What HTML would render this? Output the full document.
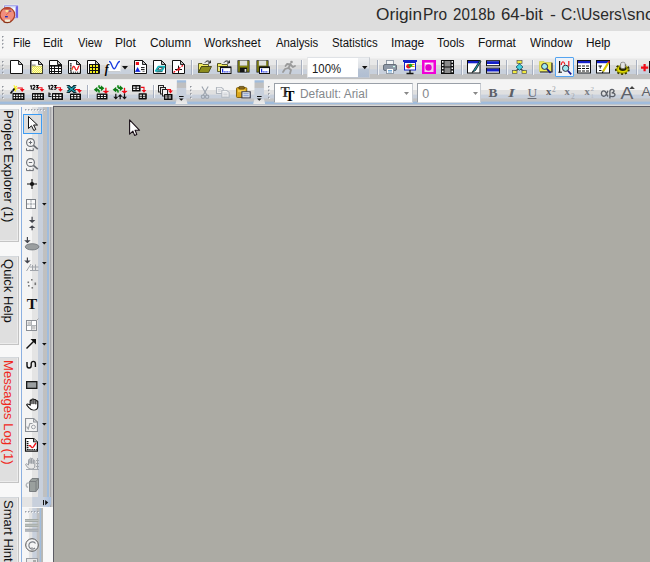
<!DOCTYPE html>
<html><head><meta charset="utf-8">
<style>
*{box-sizing:border-box;margin:0;padding:0}
html,body{width:650px;height:562px;overflow:hidden;background:#acaba4;font-family:"Liberation Sans",sans-serif;}
#root{position:relative;width:650px;height:562px;overflow:hidden;background:#acaba4}
.abs{position:absolute}
#title{left:0;top:0;width:650px;height:31px;background:#dddddd}
#title span{position:absolute;top:6.3px;font-size:15.6px;color:#2a2a2a;white-space:nowrap;transform-origin:0 0}
#menu{left:0;top:31px;width:650px;height:25px;background:#f6f6f6}
#menu span{position:absolute;top:5px;font-size:12.5px;color:#111;white-space:nowrap;transform-origin:0 0}
#tb1{left:0;top:56px;width:650px;height:24px;background:linear-gradient(#f4f4f4 0.0%,#f4f4f4 8.3%,#e8e8e8 12.5%,#e8e8e8 35.4%,#d8d8d8 39.6%,#d8d8d8 53.3%,#c8d0dc 57.5%,#c8d0dc 72.9%,#c0c0c0 77.1%,#c0c0c0 93.8%,#ececec 97.9%,#ececec 100.0%)}
#tb2{left:0;top:80px;width:650px;height:25px;background:linear-gradient(#f4f4f4 0.0%,#f4f4f4 38.0%,#e0e0e0 42.0%,#e0e0e0 56.4%,#c8d0dc 60.4%,#c8d0dc 71.6%,#c4c4c4 75.6%,#c4c4c4 84.4%,#a0bcdc 88.4%,#a0bcdc 94.8%,#c4c6c8 98.8%,#c4c6c8 100.0%)}
#leftdock{left:0;top:105px;width:53px;height:457px;background:#f8f8f8}
#vtb{left:22px;top:107px;width:31px;height:400px;background:linear-gradient(90deg,#f4f4f4 0.0%,#f4f4f4 30.6%,#e4e4e4 33.9%,#e4e4e4 50.0%,#c8d0dc 53.2%,#c8d0dc 66.1%,#c0c0c0 69.4%,#c0c0c0 79.0%,#a0bcdc 82.3%,#a0bcdc 85.5%,#c8c8c8 88.7%,#c8c8c8 89.4%,#a0a0a4 92.6%,#a0a0a4 92.9%,#d0d0d0 96.1%,#d0d0d0 100.0%)}
#vtb2{left:22px;top:507px;width:21.4px;height:55px;background:linear-gradient(90deg,#f6f6f6 0.0%,#f6f6f6 30.4%,#e4e4e4 35.0%,#e4e4e4 46.7%,#c8d0dc 51.4%,#c8d0dc 67.8%,#c0c0c0 72.4%,#c0c0c0 81.8%,#a0bcdc 86.4%,#a0bcdc 88.8%,#b8b8b4 93.5%,#b8b8b4 100.0%)}
#gap{left:53px;top:105px;width:597px;height:1.3px;background:#d8d8d8}
.sep{position:absolute;width:1px;background:#a8b0c0;box-shadow:1px 0 0 rgba(255,255,255,.7)}
.tab{position:absolute;left:0;width:19px;background:#dfdfdf;border-right:1px solid #c2c2c2;border-bottom:1px solid #c4c4c4;border-top:1px solid #d4d8dc;box-shadow:inset -1px -1px 0 #ececec}
.tabt{position:absolute;left:0;top:0;transform-origin:0 0;transform:translate(16.3px,0) rotate(90deg) scaleX(.975);font-size:13.4px;white-space:nowrap;color:#111}
svg{position:absolute;overflow:visible}
.combo{position:absolute;background:#fff;border:1px solid #b8bcc4}
</style></head><body>
<div id="root">
<div id="title" class="abs"><span style="left:376.0px;transform:scaleX(1.107)">Origin</span><span style="left:422.71px;transform:scaleX(0.988)">Pro</span><span style="left:452.9px;transform:scaleX(0.97)">2018b</span><span style="left:501.0px;transform:scaleX(1.076)">64-bit</span><span style="left:550.3px;transform:scaleX(1.14)">-</span><span style="left:560.6px;transform:scaleX(1.005)">C:\Users\</span><span style="left:627.3px;transform:scaleX(1.091)">snc</span></div>
<div id="menu" class="abs"><span style="left:13.02px;transform:scaleX(0.881)">File</span><span style="left:43.39px;transform:scaleX(0.911)">Edit</span><span style="left:77.5px;transform:scaleX(0.894)">View</span><span style="left:114.94px;transform:scaleX(0.964)">Plot</span><span style="left:149.8px;transform:scaleX(0.953)">Column</span><span style="left:204.4px;transform:scaleX(0.953)">Worksheet</span><span style="left:275.6px;transform:scaleX(0.907)">Analysis</span><span style="left:331.5px;transform:scaleX(0.912)">Statistics</span><span style="left:390.54px;transform:scaleX(0.956)">Image</span><span style="left:437.4px;transform:scaleX(0.94)">Tools</span><span style="left:477.84px;transform:scaleX(0.956)">Format</span><span style="left:529.5px;transform:scaleX(0.951)">Window</span><span style="left:585.55px;transform:scaleX(0.949)">Help</span></div>
<div id="tb1" class="abs"></div>
<div id="tb2" class="abs"></div>
<div id="leftdock" class="abs">
<div class="tab" style="top:4.2px;height:132.6px"><div class="tabt" style="top:0.1px">Project Explorer (1)</div></div>
<div class="tab" style="top:150.9px;height:88.8px"><div class="tabt" style="top:2px">Quick Help</div></div>
<div class="tab" style="top:251.6px;height:126.5px"><div class="tabt" style="top:2.4px;color:#f0281c">Messages Log (1)</div></div>
<div class="tab" style="top:392px;height:70px"><div class="tabt" style="top:2.4px">Smart Hint</div></div>
</div>
<div class="abs" style="left:20.8px;top:107px;width:1.3px;height:455px;background:#8cb0e0"></div>
<div id="vtb" class="abs"></div>
<div id="vtb2" class="abs"></div>
<div id="gap" class="abs"></div>
<div class="abs" style="left:53px;top:106.2px;width:597px;height:456px;background:#acaba4;border-left:1.3px solid #5c5c64;border-top:1.3px solid #5c5c64"></div>
<div class="abs" style="left:43.4px;top:507px;width:9.6px;height:55px;background:#f8f8f8"></div>
<svg style="left:2px;top:36.2px" width="3" height="15" viewBox="0 0 3 15" ><rect x="0" y="0.0" width="1.6" height="1.6" fill="#8e929a"/><rect x="0.9" y="0.9" width="1.2" height="1.2" fill="#fff" opacity=".85"/><rect x="0" y="3.6" width="1.6" height="1.6" fill="#8e929a"/><rect x="0.9" y="4.5" width="1.2" height="1.2" fill="#fff" opacity=".85"/><rect x="0" y="7.2" width="1.6" height="1.6" fill="#8e929a"/><rect x="0.9" y="8.1" width="1.2" height="1.2" fill="#fff" opacity=".85"/><rect x="0" y="10.8" width="1.6" height="1.6" fill="#8e929a"/><rect x="0.9" y="11.7" width="1.2" height="1.2" fill="#fff" opacity=".85"/></svg>
<svg style="left:2px;top:60.5px" width="3" height="15" viewBox="0 0 3 15" ><rect x="0" y="0.0" width="1.6" height="1.6" fill="#8e929a"/><rect x="0.9" y="0.9" width="1.2" height="1.2" fill="#fff" opacity=".85"/><rect x="0" y="3.6" width="1.6" height="1.6" fill="#8e929a"/><rect x="0.9" y="4.5" width="1.2" height="1.2" fill="#fff" opacity=".85"/><rect x="0" y="7.2" width="1.6" height="1.6" fill="#8e929a"/><rect x="0.9" y="8.1" width="1.2" height="1.2" fill="#fff" opacity=".85"/><rect x="0" y="10.8" width="1.6" height="1.6" fill="#8e929a"/><rect x="0.9" y="11.7" width="1.2" height="1.2" fill="#fff" opacity=".85"/></svg>
<svg style="left:10px;top:60px" width="13" height="14" viewBox="0 0 13 14" ><path d="M0.5 0.5H8.5L12.5 4.5V13.5H0.5Z" fill="#fff" stroke="#111"/><path d="M8.5 0.5V4.5H12.5Z" fill="#bbb" stroke="#111" stroke-width="0.9"/></svg>
<svg style="left:30px;top:60px" width="13" height="14" viewBox="0 0 13 14" ><defs><pattern id="chk" width="2" height="2" patternUnits="userSpaceOnUse"><rect width="2" height="2" fill="#f0ec48"/><rect width="1" height="1" fill="#fafac8"/><rect x="1" y="1" width="1" height="1" fill="#fafac8"/></pattern></defs><path d="M0.5 0.5H8.5L12.5 4.5V13.5H0.5Z" fill="#fff" stroke="#111"/><path d="M8.5 0.5V4.5H12.5Z" fill="#bbb" stroke="#111" stroke-width="0.9"/><path d="M1.2 1V13" stroke="#555" stroke-width="1"/><rect x="1.8" y="4.4" width="3.8" height="2.2" fill="#a8a8a8"/><rect x="1.8" y="6.3" width="10.4" height="6.9" fill="url(#chk)"/><path d="M1.8 6.3H12.2" stroke="#c8c440" stroke-width=".6"/></svg>
<svg style="left:48.5px;top:60px" width="13" height="14" viewBox="0 0 13 14" ><path d="M0.5 0.5H8.5L12.5 4.5V13.5H0.5Z" fill="#fff" stroke="#111"/><path d="M8.5 0.5V4.5H12.5Z" fill="#bbb" stroke="#111" stroke-width="0.9"/><path d="M1 5.5H12.5M1 8.5H12.5M1 11H12.5M2 5.5V13.5M5.5 5.5V13.5M9 5.5V13.5" stroke="#111" stroke-width="1" fill="none" shape-rendering="crispEdges"/><path d="M1 6.3H12.5" stroke="#111" stroke-width=".8"/></svg>
<svg style="left:68px;top:60px" width="13" height="14" viewBox="0 0 13 14" ><path d="M0.5 0.5H8.5L12.5 4.5V13.5H0.5Z" fill="#fff" stroke="#111"/><path d="M8.5 0.5V4.5H12.5Z" fill="#bbb" stroke="#111" stroke-width="0.9"/><path d="M2.8 3.2V12.4" stroke="#111" stroke-width="1.7" stroke-dasharray="1.3 .8"/><path d="M3 12.2H11.5" stroke="#222" stroke-width="1" stroke-dasharray="1.2 .8"/><path d="M4.3 9.8C4.6 5.6 6.2 5.4 7 8S9 10.8 9.8 8.4S10.6 5.6 11.6 5.8" stroke="#f0181c" stroke-width="1.25" fill="none"/><path d="M4.3 8V10" stroke="#f0a020" stroke-width=".8"/></svg>
<svg style="left:87px;top:60px" width="13" height="14" viewBox="0 0 13 14" ><path d="M0.5 0.5H8.5L12.5 4.5V13.5H0.5Z" fill="#fff" stroke="#111"/><path d="M8.5 0.5V4.5H12.5Z" fill="#bbb" stroke="#111" stroke-width="0.9"/><rect x="2" y="4" width="10" height="9.2" fill="#f2ee1c"/><path d="M2 4.5H12M2 7.5H12M2 10.5H12M2 13.5H12M2.5 4V13.5M5.5 4V13.5M8.5 4V13.5M11.5 4V13.5" stroke="#111" stroke-width="1" fill="none" shape-rendering="crispEdges"/></svg>
<svg style="left:106px;top:60px" width="15" height="14" viewBox="0 0 15 14" ><rect x="2.5" y="0" width="12" height="11.5" fill="#fff"/><path d="M2.5 11.5H14.5" stroke="#999" stroke-width=".7" stroke-dasharray="1 1"/><path d="M3 1.5C5.5 1 6 8.8 8.2 8.8S11 1 14 1.5" stroke="#1c3ce0" stroke-width="1.3" fill="none"/><text x="-1.2" y="13.2" font-family="Liberation Serif" font-style="italic" font-weight="bold" font-size="11.5" fill="#000">f</text></svg>
<svg style="left:122px;top:66px" width="6" height="4" viewBox="0 0 6 4" ><path d="M0 0H6L3 3.5Z" fill="#111"/></svg>
<svg style="left:134px;top:60px" width="13" height="14" viewBox="0 0 13 14" ><path d="M0.5 0.5H8.5L12.5 4.5V13.5H0.5Z" fill="#fff" stroke="#111"/><path d="M8.5 0.5V4.5H12.5Z" fill="#bbb" stroke="#111" stroke-width="0.9"/><rect x="1.8" y="2" width="3.2" height="3" fill="#f0101c"/><path d="M1.2 11.4L3.6 7L6 11.4Z" fill="#1428e0"/><path d="M1.2 11.4H6.4" stroke="#1428e0" stroke-width=".8"/><path d="M7 7.6H10.6M7 9.6H10.6" stroke="#111" stroke-width="1"/><path d="M8.5 11.4H10.6" stroke="#555" stroke-width=".9"/></svg>
<svg style="left:153px;top:60px" width="13" height="14" viewBox="0 0 13 14" ><path d="M0.5 0.5H8.5L12.5 4.5V13.5H0.5Z" fill="#fff" stroke="#111"/><path d="M8.5 0.5V4.5H12.5Z" fill="#bbb" stroke="#111" stroke-width="0.9"/><path d="M2.6 11L5.4 6.4H11.6L8.8 11Z" stroke="#10b4bc" stroke-width="1.5" fill="#d8f4f4" stroke-linejoin="round"/><path d="M4.6 9.8L6.2 7.6H9.6L8 9.8Z" stroke="#0a2a30" stroke-width=".8" fill="#fff"/><path d="M3.4 12L9.4 11.6" stroke="#0a2a30" stroke-width=".7"/></svg>
<svg style="left:172px;top:60px" width="13" height="14" viewBox="0 0 13 14" ><path d="M0.5 0.5H8.5L12.5 4.5V13.5H0.5Z" fill="#fff" stroke="#111"/><path d="M8.5 0.5V4.5H12.5Z" fill="#bbb" stroke="#111" stroke-width="0.9"/><path d="M1.5 12.5L11.8 4.8" stroke="#f0101c" stroke-width="1.3" stroke-dasharray="2 1.3"/><path d="M6.5 5.6V13M3 9.5H10" stroke="#111" stroke-width="1"/><circle cx="6.5" cy="9.5" r="1.3" fill="#e01018"/></svg>
<div class="sep" style="left:191px;top:59.5px;height:15px"></div>
<svg style="left:198px;top:60px" width="14" height="14" viewBox="0 0 14 14" ><path d="M0.5 3.5H4L5 4.5H10.5V6.5H3.5L0.5 12.5Z" fill="#f1ea5e" stroke="#3a3a10" stroke-width=".8"/><path d="M0.5 12.5L3.5 6.5H13.5L10.5 12.5Z" fill="#8c8c1c" stroke="#3a3a10" stroke-width=".8"/><path d="M7 2.5C8.5 0.5 11 0.5 12 2.5M12.3 0.5V3H10" stroke="#111" stroke-width="1" fill="none"/></svg>
<svg style="left:217px;top:60px" width="15" height="14" viewBox="0 0 15 14" ><path d="M0.5 3.5H4L5 4.5H10.5V6.5H0.5Z" fill="#f1ea5e" stroke="#3a3a10" stroke-width=".8"/><path d="M0.5 4V11.5H3" fill="#f1ea5e" stroke="#3a3a10" stroke-width=".8"/><path d="M7 2.5C8.5 0.5 11 0.5 12 2.5M12.3 0.5V3H10" stroke="#111" stroke-width="1" fill="none"/><rect x="3.5" y="7" width="10.5" height="6.5" fill="#fff" stroke="#111" stroke-width="1"/><path d="M3.5 7.4H14" stroke="#111" stroke-width="1.4"/><path d="M5.6 8.8V12" stroke="#1428e0" stroke-width="1.2"/><path d="M5 11.8H12.6" stroke="#1428e0" stroke-width="1.2" stroke-dasharray="1.4 .8"/></svg>
<svg style="left:237px;top:60px" width="13" height="14" viewBox="0 0 13 14" ><rect x="0.5" y="0.3" width="12" height="12.2" fill="#0c0c0c"/><rect x="1.2" y="1" width="1.6" height="10.8" fill="#8c8c10"/><rect x="10.2" y="1" width="1.6" height="10.8" fill="#8c8c10"/><rect x="2.8" y="0.6" width="7.4" height="5.2" fill="#e0e0dc"/><rect x="2.8" y="5.8" width="7.4" height="1.8" fill="#8c8c10"/><rect x="3" y="8.4" width="7" height="3.8" fill="#141414"/><rect x="7.6" y="9" width="1.7" height="2.8" fill="#e0e0dc"/></svg>
<svg style="left:255.5px;top:60px" width="14" height="14" viewBox="0 0 14 14" ><rect x="0.5" y="0.3" width="12" height="12.2" fill="#0c0c0c"/><rect x="1.2" y="1" width="1.6" height="10.8" fill="#8c8c10"/><rect x="10.2" y="1" width="1.6" height="10.8" fill="#8c8c10"/><rect x="2.8" y="0.6" width="7.4" height="5.2" fill="#e0e0dc"/><rect x="2.8" y="5.8" width="7.4" height="1.8" fill="#8c8c10"/><rect x="3" y="8.4" width="7" height="3.8" fill="#141414"/><rect x="7.6" y="9" width="1.7" height="2.8" fill="#e0e0dc"/><rect x="3.5" y="7" width="10" height="6.5" fill="#fff" stroke="#111" stroke-width="1"/><path d="M3.5 7.4H13.5" stroke="#111" stroke-width="1.4"/><path d="M5.6 8.8V12" stroke="#1428e0" stroke-width="1.2"/><path d="M5 11.8H12.2" stroke="#1428e0" stroke-width="1.2" stroke-dasharray="1.4 .8"/></svg>
<div class="sep" style="left:276px;top:59.5px;height:15px"></div>
<svg style="left:282px;top:60px" width="14" height="14" viewBox="0 0 14 14" ><g fill="none" stroke="#9a9a9a" stroke-width="1.8" stroke-linecap="round" stroke-linejoin="round"><circle cx="9.5" cy="2" r="1.3" fill="#9a9a9a" stroke="none"/><path d="M8.5 4L6.5 8L9 10L8 13.5"/><path d="M6.5 8L3 9L1 12"/><path d="M8.5 4.5L5 4L3.5 6"/><path d="M8.8 5L11 7L13 6"/></g></svg>
<div class="sep" style="left:301px;top:59.5px;height:15px"></div>
<div class="combo" style="left:307px;top:57px;width:63px;height:21px;border-color:#dfe2e6 #c8ccd2 #c0c6d0 #e8e8e8"><div style="position:absolute;left:4.2px;top:2.5px;font-size:12.8px;color:#1a1a1a;transform-origin:0 0;transform:scaleX(.89)">100%</div><div style="position:absolute;right:0;top:0;width:11px;height:19px;background:linear-gradient(#eef0f2,#dcdfe4 50%,#b7c3d4 60%,#b0bed2)"></div></div>
<svg style="left:362px;top:66px" width="6" height="4" viewBox="0 0 6 4" ><path d="M0 0H5.5L2.75 3.2Z" fill="#111"/></svg>
<div class="sep" style="left:377px;top:59.5px;height:15px"></div>
<svg style="left:383px;top:60px" width="14" height="14" viewBox="0 0 14 14" ><rect x="3.5" y="0.5" width="7" height="5" fill="#f4f6f8" stroke="#8a94a0" stroke-width=".9"/><rect x="0.5" y="4.5" width="13" height="6" rx="1.5" fill="#8e98a6" stroke="#5c6672" stroke-width=".9"/><rect x="3.5" y="8.5" width="7" height="5" fill="#fff" stroke="#8a94a0" stroke-width=".9"/><rect x="10" y="6" width="2" height="1.2" fill="#cfe"/><path d="M5 10.5H9M5 12H9" stroke="#38c" stroke-width=".7"/></svg>
<svg style="left:402.5px;top:60px" width="14" height="15" viewBox="0 0 14 15" ><rect x="0" y="0" width="14" height="2" fill="#1420c8"/><rect x="1.5" y="2.5" width="11" height="7.5" fill="#fff" stroke="#1420c8" stroke-width="1"/><circle cx="5.5" cy="6.2" r="2.3" fill="#e8181c"/><circle cx="7.5" cy="5.5" r="1.8" fill="#1ca01c"/><path d="M9 4.5H11.5M9 6.5H11.5" stroke="#c8a000" stroke-width="1"/><path d="M7 10V13M3.5 13.5H10.5" stroke="#111" stroke-width="1.3"/></svg>
<svg style="left:421.5px;top:60px" width="14" height="14" viewBox="0 0 14 14" ><rect x="0" y="0" width="14" height="14" fill="#f000d8"/><rect x="2.5" y="2.5" width="9" height="9.5" fill="#f4c8ee"/><circle cx="6.5" cy="7.5" r="3.2" fill="#e000cc"/><path d="M3 3.5H8" stroke="#fff" stroke-width="1"/></svg>
<svg style="left:441px;top:60px" width="13" height="14" viewBox="0 0 13 14" ><rect x="0" y="0" width="13" height="14" fill="#0c0c0c"/><rect x="3.5" y="1" width="6" height="5.5" fill="#8a8a8a"/><rect x="3.5" y="7.5" width="6" height="5.5" fill="#8a8a8a"/><g fill="#fff"><rect x="1" y="1" width="1.5" height="1.7"/><rect x="1" y="4.2" width="1.5" height="1.7"/><rect x="1" y="7.4" width="1.5" height="1.7"/><rect x="1" y="10.6" width="1.5" height="1.7"/><rect x="10.5" y="1" width="1.5" height="1.7"/><rect x="10.5" y="4.2" width="1.5" height="1.7"/><rect x="10.5" y="7.4" width="1.5" height="1.7"/><rect x="10.5" y="10.6" width="1.5" height="1.7"/></g></svg>
<div class="sep" style="left:461px;top:59.5px;height:15px"></div>
<svg style="left:466.5px;top:60px" width="14" height="14" viewBox="0 0 14 14" ><rect x="0.5" y="0.5" width="12.5" height="12.5" fill="#fff" stroke="#111" stroke-width="1"/><rect x="1" y="1" width="11.5" height="2.3" fill="#1420c8"/><path d="M12.8 0.5L7 9.5L5 12.5L8.5 10.5L13.8 1.5Z" fill="#1ca8b8" stroke="#111" stroke-width=".8"/></svg>
<svg style="left:486px;top:60px" width="14" height="14" viewBox="0 0 14 14" ><rect x="0.5" y="0.7" width="13" height="5" fill="#fff" stroke="#111"/><rect x="1" y="1.2" width="12" height="2.8" fill="#1420c8"/><rect x="0.5" y="8.2" width="13" height="5" fill="#fff" stroke="#111"/><rect x="1" y="8.7" width="12" height="2.8" fill="#1420c8"/></svg>
<div class="sep" style="left:506px;top:59.5px;height:15px"></div>
<svg style="left:512px;top:60px" width="15" height="14" viewBox="0 0 15 14" ><path d="M7.5 3V5M7.5 9L2.5 11M7.5 9L12.5 11" stroke="#111" stroke-width="1"/><rect x="5" y="0.5" width="5" height="3" fill="#f1ea3e" stroke="#555" stroke-width=".7"/><path d="M7.5 3.8L11 7L7.5 10.2L4 7Z" fill="#48d0e0" stroke="#156" stroke-width=".8"/><rect x="0.5" y="10.5" width="4.5" height="3" fill="#f1ea3e" stroke="#555" stroke-width=".7"/><rect x="10" y="10.5" width="4.5" height="3" fill="#f1ea3e" stroke="#555" stroke-width=".7"/></svg>
<div class="sep" style="left:532px;top:59.5px;height:15px"></div>
<svg style="left:539px;top:60px" width="14" height="14" viewBox="0 0 14 14" ><path d="M0.5 1.5H5L6 2.5H12.5V11.5H0.5Z" fill="#f0ec58" stroke="#c8c440" stroke-width=".6"/><path d="M13 2.8V12H1" stroke="#222" stroke-width="1.2" fill="none"/><circle cx="5.6" cy="6.4" r="3" fill="#a0e8f0" stroke="#2a2a3a" stroke-width="1"/><path d="M7.8 8.8L11.6 12.8" stroke="#14148c" stroke-width="1.7"/></svg>
<div style="position:absolute;left:555px;top:57.2px;width:19px;height:19.6px;border:1px solid #54a4f0;background:#eef2f8;border-radius:1px"></div>
<svg style="left:558px;top:60px" width="14" height="15" viewBox="0 0 14 15" ><path d="M1.6 1V12.4" stroke="#111" stroke-width="1.2"/><path d="M0.3 12.2H4" stroke="#111" stroke-width="1"/><path d="M3.2 5C4 0.5 6 1 6.8 4.5M10.8 1V6.5" stroke="#f0181c" stroke-width="1.2" fill="none"/><circle cx="7.6" cy="8.3" r="3.1" fill="#a0e8f0" stroke="#2a2a3a" stroke-width="1"/><path d="M9.9 10.7L13.2 14.4" stroke="#14148c" stroke-width="1.7"/></svg>
<svg style="left:577px;top:60px" width="14" height="14" viewBox="0 0 14 14" ><rect x="0.5" y="0.5" width="13" height="12.5" fill="#fff" stroke="#111"/><rect x="1" y="1" width="12" height="2.2" fill="#1420c8"/><path d="M1 6H13M1 8.5H13M1 11H13" stroke="#111" stroke-width="1.2" stroke-dasharray="3 1"/></svg>
<svg style="left:596px;top:60px" width="14" height="14" viewBox="0 0 14 14" ><rect x="0.5" y="0.5" width="13" height="12.5" fill="#fff" stroke="#111"/><rect x="1" y="1" width="12" height="2.2" fill="#1420c8"/><path d="M2.5 6H6M4.2 6V8.5M3 10.5H5.5" stroke="#111" stroke-width="1"/><path d="M12.5 2.5L7 11.5" stroke="#d8c800" stroke-width="2.2"/><path d="M12.2 1.5L13.5 2.5" stroke="#e8181c" stroke-width="1.8"/><path d="M7 11.5L6.3 13" stroke="#111" stroke-width="1.2"/></svg>
<svg style="left:614.5px;top:61.5px" width="15" height="13" viewBox="0 0 15 13" ><ellipse cx="7.4" cy="7.4" rx="6.2" ry="4.3" fill="#d4d000" stroke="#3a3800" stroke-width="2.4" stroke-dasharray="2 1.7"/><ellipse cx="7.4" cy="7.4" rx="5.6" ry="3.7" fill="#dcd800" stroke="#8a8600" stroke-width=".8"/><ellipse cx="7.8" cy="6.6" rx="3.8" ry="2.3" fill="#2a2800"/><rect x="5.6" y="0.3" width="4.6" height="6.3" rx="1.6" fill="#e6e6e6" stroke="#777" stroke-width=".7"/></svg>
<div class="sep" style="left:635.5px;top:59.5px;height:15px"></div>
<svg style="left:641px;top:63.7px" width="9" height="8" viewBox="0 0 9 8" ><path d="M0 3.6H7.2M3.6 0V7.2" stroke="#f00c18" stroke-width="2.2"/></svg>
<div style="position:absolute;left:648.7px;top:60.5px;width:2px;height:12.3px;background:#111"></div>
<svg style="left:2px;top:85.6px" width="3" height="15" viewBox="0 0 3 15" ><rect x="0" y="0.0" width="1.6" height="1.6" fill="#8e929a"/><rect x="0.9" y="0.9" width="1.2" height="1.2" fill="#fff" opacity=".85"/><rect x="0" y="3.6" width="1.6" height="1.6" fill="#8e929a"/><rect x="0.9" y="4.5" width="1.2" height="1.2" fill="#fff" opacity=".85"/><rect x="0" y="7.2" width="1.6" height="1.6" fill="#8e929a"/><rect x="0.9" y="8.1" width="1.2" height="1.2" fill="#fff" opacity=".85"/><rect x="0" y="10.8" width="1.6" height="1.6" fill="#8e929a"/><rect x="0.9" y="11.7" width="1.2" height="1.2" fill="#fff" opacity=".85"/></svg>
<svg style="left:9.5px;top:85px" width="15" height="15" viewBox="0 0 15 15" ><path d="M4 0L4.6 2.4L7 1L5.4 3.2L7.5 4L5.2 4.4L5.5 6.5L4 4.8" fill="#f8f020" stroke="#f8f020" stroke-width=".8"/><path d="M0.5 8.5L4.5 3.5" stroke="#111" stroke-width="1.8"/><path d="M2.2 5.6L3.4 6.6" stroke="#9af" stroke-width=".8"/><path d="M7.5 3H12.2V4.5" stroke="#f00c18" stroke-width="1.1" fill="none"/><path d="M9.799999999999999 4.1H14.6L12.2 6.9Z" fill="#f00c18"/><rect x="2.5" y="8" width="12" height="7" rx=".6" fill="#0c0c0c"/><rect x="3.60" y="9.50" width="1.50" height="1.50" fill="#fff"/><rect x="6.20" y="9.50" width="1.50" height="1.50" fill="#fff"/><rect x="8.80" y="9.50" width="1.50" height="1.50" fill="#fff"/><rect x="11.40" y="9.50" width="1.50" height="1.50" fill="#fff"/><rect x="3.60" y="11.90" width="1.50" height="1.50" fill="#fff"/><rect x="6.20" y="11.90" width="1.50" height="1.50" fill="#fff"/><rect x="8.80" y="11.90" width="1.50" height="1.50" fill="#fff"/><rect x="11.40" y="11.90" width="1.50" height="1.50" fill="#fff"/></svg>
<svg style="left:29.5px;top:85px" width="15" height="15" viewBox="0 0 15 15" ><g transform="translate(0 -0.10000000000000053)" stroke="#000" stroke-width="1.05" fill="none"><path d="M1.3 0.3V4.7M0.2 1.5L1.3 0.4"/><path d="M2.8 1.3C2.8 0.1 5 0.1 5 1.4C5 2.6 2.8 3.3 2.8 4.3H5.3"/><path d="M6.1 0.6H8.1L6.9 2.2C8.7 2.2 8.6 4.4 7 4.4H6.1"/></g><path d="M8 2.8H12V4.3" stroke="#f00c18" stroke-width="1.1" fill="none"/><path d="M9.6 3.9H14.4L12 6.7Z" fill="#f00c18"/><rect x="2" y="8" width="12" height="7" rx=".6" fill="#0c0c0c"/><rect x="3.10" y="9.50" width="1.50" height="1.50" fill="#fff"/><rect x="5.70" y="9.50" width="1.50" height="1.50" fill="#fff"/><rect x="8.30" y="9.50" width="1.50" height="1.50" fill="#fff"/><rect x="10.90" y="9.50" width="1.50" height="1.50" fill="#fff"/><rect x="3.10" y="11.90" width="1.50" height="1.50" fill="#fff"/><rect x="5.70" y="11.90" width="1.50" height="1.50" fill="#fff"/><rect x="8.30" y="11.90" width="1.50" height="1.50" fill="#fff"/><rect x="10.90" y="11.90" width="1.50" height="1.50" fill="#fff"/></svg>
<svg style="left:48px;top:85px" width="15" height="15" viewBox="0 0 15 15" ><g transform="translate(0 -0.10000000000000053)" stroke="#000" stroke-width="1.05" fill="none"><path d="M1.3 0.3V4.7M0.2 1.5L1.3 0.4"/><path d="M2.8 1.3C2.8 0.1 5 0.1 5 1.4C5 2.6 2.8 3.3 2.8 4.3H5.3"/><path d="M6.1 0.6H8.1L6.9 2.2C8.7 2.2 8.6 4.4 7 4.4H6.1"/></g><path d="M8 2.8H12.5V4.3" stroke="#f00c18" stroke-width="1.1" fill="none"/><path d="M10.1 3.9H14.9L12.5 6.7Z" fill="#f00c18"/><path d="M1 7.5V11.5H3.5M1 9H3" stroke="#111" stroke-width="1.2" fill="none"/><rect x="4" y="8" width="11" height="7" rx=".6" fill="#0c0c0c"/><rect x="5.10" y="9.50" width="2.03" height="1.50" fill="#fff"/><rect x="8.23" y="9.50" width="2.03" height="1.50" fill="#fff"/><rect x="11.37" y="9.50" width="2.03" height="1.50" fill="#fff"/><rect x="5.10" y="11.90" width="2.03" height="1.50" fill="#fff"/><rect x="8.23" y="11.90" width="2.03" height="1.50" fill="#fff"/><rect x="11.37" y="11.90" width="2.03" height="1.50" fill="#fff"/></svg>
<svg style="left:67px;top:85px" width="15" height="15" viewBox="0 0 15 15" ><path d="M1 1.2L8 7M8 1.2L1 7" stroke="#04222a" stroke-width="3.1"/><path d="M1 1.2L8 7M8 1.2L1 7" stroke="#1ca4b4" stroke-width="1.2"/><path d="M-0.4 0.6H2.6M6.4 0.6H9.4M-0.4 7.4H2.6M6.4 7.4H9.4" stroke="#04222a" stroke-width="1"/><path d="M8 4.5H12.5V5.5" stroke="#f00c18" stroke-width="1.1" fill="none"/><path d="M10.1 5.1H14.9L12.5 7.9Z" fill="#f00c18"/><rect x="3" y="8.5" width="11" height="6.5" rx=".6" fill="#0c0c0c"/><rect x="4.10" y="10.00" width="2.03" height="1.25" fill="#fff"/><rect x="7.23" y="10.00" width="2.03" height="1.25" fill="#fff"/><rect x="10.37" y="10.00" width="2.03" height="1.25" fill="#fff"/><rect x="4.10" y="12.15" width="2.03" height="1.25" fill="#fff"/><rect x="7.23" y="12.15" width="2.03" height="1.25" fill="#fff"/><rect x="10.37" y="12.15" width="2.03" height="1.25" fill="#fff"/></svg>
<div class="sep" style="left:87px;top:85px;height:13px"></div>
<svg style="left:93.5px;top:85px" width="15" height="15" viewBox="0 0 15 15" ><g fill="#0c7c14" stroke="none"><path d="M-0.2 4.8L3.3 1.8V7.6Z"/><path d="M10.4 3.2L6.9 0.2V6.2Z"/></g><path d="M3 4.7Q5.2 4.7 5.2 7.4" stroke="#0c7c14" stroke-width="1.7" fill="none"/><path d="M7.2 3.2Q5 3.2 4.9 0.4" stroke="#0c7c14" stroke-width="1.7" fill="none"/><path d="M4.9 0.5L5.3 2M5.2 7.2L5 6" stroke="#50c850" stroke-width=".8"/><path d="M11.9 2.8V7.1" stroke="#f00c18" stroke-width="1.3"/><path d="M9.3 6.199999999999999H14.5L11.9 8.799999999999999Z" fill="#f00c18"/><path d="M9.3 6.3999999999999995H14.5" stroke="#f00c18" stroke-width="1"/><rect x="2.7" y="8.4" width="10.8" height="6.2" rx=".6" fill="#0c0c0c"/><rect x="3.80" y="9.90" width="1.97" height="1.10" fill="#fff"/><rect x="6.87" y="9.90" width="1.97" height="1.10" fill="#fff"/><rect x="9.93" y="9.90" width="1.97" height="1.10" fill="#fff"/><rect x="3.80" y="11.90" width="1.97" height="1.10" fill="#fff"/><rect x="6.87" y="11.90" width="1.97" height="1.10" fill="#fff"/><rect x="9.93" y="11.90" width="1.97" height="1.10" fill="#fff"/></svg>
<svg style="left:112px;top:85px" width="15" height="15" viewBox="0 0 15 15" ><g transform="translate(0.9 0)"><g fill="#0c7c14" stroke="none"><path d="M-0.2 4.8L3.3 1.8V7.6Z"/><path d="M10.4 3.2L6.9 0.2V6.2Z"/></g><path d="M3 4.7Q5.2 4.7 5.2 7.4" stroke="#0c7c14" stroke-width="1.7" fill="none"/><path d="M7.2 3.2Q5 3.2 4.9 0.4" stroke="#0c7c14" stroke-width="1.7" fill="none"/><path d="M4.9 0.5L5.3 2M5.2 7.2L5 6" stroke="#50c850" stroke-width=".8"/></g><path d="M12.5 2.8V7.1" stroke="#f00c18" stroke-width="1.3"/><path d="M9.9 6.199999999999999H15.1L12.5 8.799999999999999Z" fill="#f00c18"/><path d="M9.9 6.3999999999999995H15.1" stroke="#f00c18" stroke-width="1"/><path d="M3.8 8.7V13.5" stroke="#111" stroke-width="1.2"/><path d="M1.2999999999999998 11.7H6.3L3.8 14.5Z" fill="#111"/><path d="M8.2 14.2V9.9" stroke="#111" stroke-width="1.2"/><path d="M5.699999999999999 11.7H10.7L8.2 8.9Z" fill="#111"/><path d="M12.5 8.4V13.5" stroke="#111" stroke-width="1.2"/><path d="M10.0 11.7H15.0L12.5 14.5Z" fill="#111"/></svg>
<svg style="left:131.8px;top:85px" width="15" height="15" viewBox="0 0 15 15" ><rect x="0" y="0" width="8.6" height="6.6" rx=".6" fill="#0c0c0c"/><rect x="1.10" y="1.50" width="2.40" height="1.30" fill="#fff"/><rect x="4.60" y="1.50" width="2.40" height="1.30" fill="#fff"/><rect x="1.10" y="3.70" width="2.40" height="1.30" fill="#fff"/><rect x="4.60" y="3.70" width="2.40" height="1.30" fill="#fff"/><path d="M8.9 2.4H12V5.4" stroke="#f00c18" stroke-width="1.1" fill="none"/><path d="M9.6 5.0H14.4L12 7.800000000000001Z" fill="#f00c18"/><rect x="6.6" y="8.2" width="8.2" height="6.2" rx=".6" fill="#0c0c0c"/><rect x="7.70" y="9.70" width="2.20" height="1.10" fill="#fff"/><rect x="11.00" y="9.70" width="2.20" height="1.10" fill="#fff"/><rect x="7.70" y="11.70" width="2.20" height="1.10" fill="#fff"/><rect x="11.00" y="11.70" width="2.20" height="1.10" fill="#fff"/></svg>
<div class="sep" style="left:152.5px;top:85px;height:13px"></div>
<svg style="left:158px;top:85px" width="15" height="15" viewBox="0 0 15 15" ><rect x="0.5" y="0.5" width="5" height="6.5" fill="#e8e8e8" stroke="#222" stroke-width="1"/><rect x="2.5" y="2.5" width="5" height="6.5" fill="#e8e8e8" stroke="#222" stroke-width="1"/><rect x="4.5" y="4.5" width="5" height="6.5" fill="#f4f4f4" stroke="#222" stroke-width="1"/><path d="M9 4.5H12.5V6" stroke="#f00c18" stroke-width="1.1" fill="none"/><path d="M10.1 5.6H14.9L12.5 8.4Z" fill="#f00c18"/><rect x="6" y="9" width="8.5" height="6" rx=".6" fill="#0c0c0c"/><rect x="7.10" y="10.50" width="2.35" height="1.00" fill="#fff"/><rect x="10.55" y="10.50" width="2.35" height="1.00" fill="#fff"/><rect x="7.10" y="12.40" width="2.35" height="1.00" fill="#fff"/><rect x="10.55" y="12.40" width="2.35" height="1.00" fill="#fff"/></svg>
<div style="position:absolute;left:175.4px;top:80.2px;width:12.2px;height:24px;clip-path:polygon(12% 0,88% 0,90% 80%,100% 100%,0 100%,10% 80%);background:linear-gradient(#a0bcdc 0%,#a0bcdc 9%,#c0c0c0 12%,#c0c0c0 31%,#c8d0dc 35%,#c8d0dc 78%,#e2e2e2 84%,#ececec 100%)"></div>
<svg style="left:178.9px;top:96.2px" width="5" height="5" viewBox="0 0 5 5" ><path d="M0 0.5H4.6" stroke="#111" stroke-width="1"/><path d="M0 2.4H4.6L2.3 4.8Z" fill="#111"/></svg>
<svg style="left:189.8px;top:85.6px" width="3" height="15" viewBox="0 0 3 15" ><rect x="0" y="0.0" width="1.6" height="1.6" fill="#8e929a"/><rect x="0.9" y="0.9" width="1.2" height="1.2" fill="#fff" opacity=".85"/><rect x="0" y="3.6" width="1.6" height="1.6" fill="#8e929a"/><rect x="0.9" y="4.5" width="1.2" height="1.2" fill="#fff" opacity=".85"/><rect x="0" y="7.2" width="1.6" height="1.6" fill="#8e929a"/><rect x="0.9" y="8.1" width="1.2" height="1.2" fill="#fff" opacity=".85"/><rect x="0" y="10.8" width="1.6" height="1.6" fill="#8e929a"/><rect x="0.9" y="11.7" width="1.2" height="1.2" fill="#fff" opacity=".85"/></svg>
<svg style="left:200.8px;top:86px" width="9" height="15" viewBox="0 0 9 15" ><g transform="scale(.9 .9)" stroke="#9ca4ae" fill="none" stroke-width="1.25"><path d="M1 0.5L6.4 10M8 0.5L2.6 10"/><circle cx="2.2" cy="12" r="1.9"/><circle cx="6.8" cy="12" r="1.9"/></g></svg>
<svg style="left:216.4px;top:87px" width="14" height="11" viewBox="0 0 14 11" ><g transform="scale(.97 .76)"><g stroke="#b0b6be" fill="#f0f1f2" stroke-width="1.1"><path d="M0.5 0.5H5.5L7.5 2.5V8.5H0.5Z"/><path d="M6 4.5H11L13.5 7V13.5H6Z" fill="#f4f5f6"/></g><path d="M2 3.5H5M2 5.5H5M7.5 8H12M7.5 10H12M7.5 12H12" stroke="#c4c8ce" stroke-width=".9"/></g></svg>
<svg style="left:236px;top:85.6px" width="15" height="12" viewBox="0 0 15 12" ><g transform="scale(.98 .82)"><rect x="0.5" y="2" width="10.5" height="12" rx="1" fill="#dca81c" stroke="#7a5800" stroke-width="1"/><rect x="3" y="0.5" width="5.5" height="3.5" rx="1" fill="#8a6a20" stroke="#4a3800" stroke-width=".8"/><rect x="2" y="4.5" width="7.5" height="3" fill="#f4cc4c"/><rect x="6" y="7" width="8.5" height="7.5" fill="#e6eaf0" stroke="#334" stroke-width="1.1"/><path d="M7.5 9.5H13M7.5 12H13" stroke="#7c94c8" stroke-width="1.3"/></g></svg>
<div style="position:absolute;left:253.1px;top:80.2px;width:12.2px;height:24px;clip-path:polygon(12% 0,88% 0,90% 80%,100% 100%,0 100%,10% 80%);background:linear-gradient(#a0bcdc 0%,#a0bcdc 9%,#c0c0c0 12%,#c0c0c0 31%,#c8d0dc 35%,#c8d0dc 78%,#e2e2e2 84%,#ececec 100%)"></div>
<svg style="left:256.6px;top:96.2px" width="5" height="5" viewBox="0 0 5 5" ><path d="M0 0.5H4.6" stroke="#111" stroke-width="1"/><path d="M0 2.4H4.6L2.3 4.8Z" fill="#111"/></svg>
<svg style="left:267.6px;top:85.6px" width="3" height="15" viewBox="0 0 3 15" ><rect x="0" y="0.0" width="1.6" height="1.6" fill="#8e929a"/><rect x="0.9" y="0.9" width="1.2" height="1.2" fill="#fff" opacity=".85"/><rect x="0" y="3.6" width="1.6" height="1.6" fill="#8e929a"/><rect x="0.9" y="4.5" width="1.2" height="1.2" fill="#fff" opacity=".85"/><rect x="0" y="7.2" width="1.6" height="1.6" fill="#8e929a"/><rect x="0.9" y="8.1" width="1.2" height="1.2" fill="#fff" opacity=".85"/><rect x="0" y="10.8" width="1.6" height="1.6" fill="#8e929a"/><rect x="0.9" y="11.7" width="1.2" height="1.2" fill="#fff" opacity=".85"/></svg>
<div class="combo" style="left:274px;top:83px;width:139px;height:20px;border-color:#9aa0a8 #c8ccd2 #d8dce0 #9aa0a8"><div style="position:absolute;left:24.9px;top:3.2px;font-size:12.5px;color:#84888c;white-space:nowrap;transform-origin:0 0;transform:scaleX(.953)">Default: Arial</div></div>
<svg style="left:0px;top:0px" width="300" height="110" viewBox="0 0 300 110" ><text x="280.4" y="97" font-family="Liberation Serif" font-weight="bold" font-size="13.8" fill="#3c3c3c">T</text><text x="285.2" y="100.8" font-family="Liberation Serif" font-weight="bold" font-size="13.8" fill="#000">T</text></svg>
<svg style="left:403.5px;top:91.5px" width="6" height="4" viewBox="0 0 6 4" ><path d="M0 0H5L2.5 3Z" fill="#888"/></svg>
<div class="combo" style="left:417px;top:83px;width:64px;height:20px;border-color:#9aa0a8 #c8ccd2 #d8dce0 #9aa0a8"><div style="position:absolute;left:4.3px;top:3.2px;font-size:12.5px;color:#84888c">0</div></div>
<svg style="left:472.5px;top:91.5px" width="6" height="4" viewBox="0 0 6 4" ><path d="M0 0H5L2.5 3Z" fill="#888"/></svg>
<svg style="left:0px;top:0px" width="650" height="110" viewBox="0 0 650 110" ><text x="488.4" y="96.6" font-family="Liberation Serif" font-size="13.5" font-weight="bold" font-style="normal" fill="#5c6068" >B</text><g transform="translate(508.2 0) scale(1.25 1)"><text x="0" y="96.6" font-family="Liberation Serif" font-size="13.5" font-weight="bold" font-style="italic" fill="#5c6068" >I</text></g><text x="527.4" y="96.6" font-family="Liberation Serif" font-size="13.5" font-weight="normal" font-style="normal" fill="#6a6e76" >U</text><path d="M527.6 98.5H536.4" stroke="#6a6e76" stroke-width="1"/><text x="546" y="95.3" font-family="Liberation Serif" font-size="10.5" font-weight="bold" font-style="normal" fill="#5c6068" >x</text><text x="552" y="91.8" font-family="Liberation Serif" font-size="7.5" font-weight="normal" font-style="normal" fill="#9a9ea6" >2</text><text x="564.6" y="95.3" font-family="Liberation Serif" font-size="10.5" font-weight="bold" font-style="normal" fill="#7a7e86" >x</text><text x="571" y="98.6" font-family="Liberation Serif" font-size="7.5" font-weight="normal" font-style="normal" fill="#a4a8b0" >2</text><text x="584.4" y="95.3" font-family="Liberation Serif" font-size="10.5" font-weight="bold" font-style="normal" fill="#7a7e86" >x</text><text x="590.6" y="91.3" font-family="Liberation Serif" font-size="7" font-weight="normal" font-style="normal" fill="#a4a8b0" >2</text><text x="590.6" y="98.3" font-family="Liberation Serif" font-size="7" font-weight="normal" font-style="normal" fill="#b8bcc2" >1</text><path d="M607.9 90.8C607 93 606.6 94.2 605.6 95.4C604.4 96.8 601.6 96.6 601.4 93.8C601.2 91 603.8 90.2 605.2 91.4C606.4 92.6 606.6 95 608 96.4" stroke="#5c6068" stroke-width="1.35" fill="none"/><path d="M609.9 98.4V91.6C609.9 88.8 614 88.6 614 91C614 92.4 612.8 92.8 611.6 92.8C613.6 92.8 615 93.6 615 94.8C615 96.8 612 97.2 610 96" stroke="#5c6068" stroke-width="1.35" fill="none"/><g transform="translate(620.6 0) scale(1.17 1)"><text x="0" y="98.6" font-family="Liberation Sans" font-size="16.5" font-weight="normal" font-style="normal" fill="#5c6068" >A</text></g><path d="M629.3 89L632 86L634.8 89Z" fill="#444"/><g transform="translate(641.6 0) scale(1.15 1)"><text x="0" y="96.2" font-family="Liberation Sans" font-size="12" font-weight="normal" font-style="normal" fill="#5c6068" >A</text></g></svg>
<svg style="left:25px;top:109px" width="20" height="3" viewBox="0 0 20 3" ><rect x="0" y="0" width="1.6" height="1.6" fill="#9aa0aa"/><rect x="0.8" y="0.8" width="1.2" height="1.2" fill="#fff" opacity=".8"/><rect x="3" y="0" width="1.6" height="1.6" fill="#9aa0aa"/><rect x="3.8" y="0.8" width="1.2" height="1.2" fill="#fff" opacity=".8"/><rect x="6" y="0" width="1.6" height="1.6" fill="#9aa0aa"/><rect x="6.8" y="0.8" width="1.2" height="1.2" fill="#fff" opacity=".8"/><rect x="9" y="0" width="1.6" height="1.6" fill="#9aa0aa"/><rect x="9.8" y="0.8" width="1.2" height="1.2" fill="#fff" opacity=".8"/><rect x="12" y="0" width="1.6" height="1.6" fill="#9aa0aa"/><rect x="12.8" y="0.8" width="1.2" height="1.2" fill="#fff" opacity=".8"/><rect x="15" y="0" width="1.6" height="1.6" fill="#9aa0aa"/><rect x="15.8" y="0.8" width="1.2" height="1.2" fill="#fff" opacity=".8"/><rect x="18" y="0" width="1.6" height="1.6" fill="#9aa0aa"/><rect x="18.8" y="0.8" width="1.2" height="1.2" fill="#fff" opacity=".8"/></svg>
<div style="position:absolute;left:23px;top:114px;width:19px;height:20px;border:1px solid #3c9cf4;background:#dedede"></div>
<svg style="left:28px;top:116px" width="10" height="15" viewBox="0 0 10 15" ><path d="M0.5 0.5V12.5L3.5 9.8L5.8 14.5L7.8 13.5L5.6 9H9.5Z" fill="#fff" stroke="#111" stroke-width="1" stroke-linejoin="miter"/></svg>
<svg style="left:26px;top:137.7px" width="13" height="13" viewBox="0 0 13 13" ><circle cx="4.5" cy="4.5" r="3.9" fill="#f6f6f6" stroke="#6a6e74" stroke-width="1.1"/><path d="M7.4 7.4L11.8 11.2" stroke="#6a6e74" stroke-width="1.7"/><path d="M2.8 4.5H6.2" stroke="#6a6e74" stroke-width="1"/><path d="M4.5 2.8V6.2" stroke="#6a6e74" stroke-width="1"/><path d="M0.5 10.3V12.6H7.3V10.3M3.9 11.4V12.6" stroke="#6a6e74" stroke-width="1" fill="none"/></svg>
<svg style="left:26px;top:157.9px" width="13" height="13" viewBox="0 0 13 13" ><circle cx="4.5" cy="4.5" r="3.9" fill="#f6f6f6" stroke="#6a6e74" stroke-width="1.1"/><path d="M7.4 7.4L11.8 11.2" stroke="#6a6e74" stroke-width="1.7"/><path d="M2.8 4.5H6.2" stroke="#6a6e74" stroke-width="1"/><path d="M0.5 10.3V12.6H7.3V10.3M3.9 11.4V12.6" stroke="#6a6e74" stroke-width="1" fill="none"/></svg>
<svg style="left:26.7px;top:178.8px" width="10" height="10" viewBox="0 0 10 10" ><path d="M5 0V10M0 5H10" stroke="#111" stroke-width="1.1"/><circle cx="5" cy="5" r="2.1" fill="#111"/></svg>
<svg style="left:26.2px;top:199.2px" width="10" height="10" viewBox="0 0 10 10" ><rect x="0.5" y="0.5" width="9" height="9" fill="#fafafa" stroke="#7c8086" stroke-width="1"/><path d="M5 1V3.6M5 6.4V9M1 5H3.6M6.4 5H9" stroke="#a4a8ae" stroke-width="1"/><rect x="4" y="4" width="2" height="2" fill="#b4b8bc"/></svg>
<svg style="left:41.6px;top:202.5px" width="5" height="3" viewBox="0 0 5 3" ><path d="M0 0H4.6L2.3 2.5Z" fill="#111"/></svg>
<svg style="left:0px;top:0px" width="60" height="300" viewBox="0 0 60 300" ><path d="M32.1 216.8V221.9" stroke="#44464e" stroke-width="1.2"/><path d="M28.900000000000002 220.0H35.300000000000004L32.1 222.9Z" fill="#44464e"/><path d="M32.1 230.2V226.2" stroke="#44464e" stroke-width="1.2"/><path d="M28.900000000000002 228.1H35.300000000000004L32.1 225.2Z" fill="#44464e"/></svg>
<svg style="left:0px;top:0px" width="60" height="300" viewBox="0 0 60 300" ><path d="M27.4 237V242.2" stroke="#44464e" stroke-width="1.2"/><path d="M24.2 240.29999999999998H30.599999999999998L27.4 243.2Z" fill="#44464e"/><ellipse cx="32.1" cy="246.8" rx="6.8" ry="3.1" fill="#9a9ea0" stroke="#74787e" stroke-width=".9"/></svg>
<svg style="left:41.6px;top:242.3px" width="5" height="3" viewBox="0 0 5 3" ><path d="M0 0H4.6L2.3 2.5Z" fill="#111"/></svg>
<svg style="left:0px;top:0px" width="60" height="300" viewBox="0 0 60 300" ><path d="M27.4 257.4V262.4" stroke="#44464e" stroke-width="1.2"/><path d="M24.2 260.5H30.599999999999998L27.4 263.4Z" fill="#44464e"/><path d="M26.5 271L31 264M30 267H38.5M32.5 265V271M35.5 264.5V271M30 270.5H38.5" stroke="#a0a4aa" stroke-width="1" fill="none"/></svg>
<svg style="left:41.6px;top:262.4px" width="5" height="3" viewBox="0 0 5 3" ><path d="M0 0H4.6L2.3 2.5Z" fill="#111"/></svg>
<svg style="left:27px;top:279px" width="10" height="10" viewBox="0 0 10 10" ><g fill="#777"><rect x="4" y="0" width="1.6" height="1.6"/><rect x="0.5" y="2.5" width="1.6" height="1.6"/><rect x="7.5" y="3.5" width="1.6" height="2.6"/><rect x="1" y="6" width="1.6" height="1.6"/><rect x="4.5" y="8" width="1.6" height="1.6"/></g></svg>
<svg style="left:0px;top:0px" width="60" height="320" viewBox="0 0 60 320" ><g transform="translate(26.7 0) scale(1.06 1)"><text x="0" y="308.8" font-family="Liberation Serif" font-weight="bold" font-size="14.8" fill="#111">T</text></g></svg>
<svg style="left:26px;top:318.2px" width="13" height="13" viewBox="0 0 13 13" ><rect x="0.5" y="2.5" width="10" height="10" fill="#fff" stroke="#8a8e94" stroke-width="1"/><path d="M5.5 3V12M1 7.5H10" stroke="#b0b4b8" stroke-width="1"/><rect x="1.5" y="3.5" width="3.5" height="3.5" fill="#c8c8c8"/><rect x="6" y="8" width="3.5" height="3.5" fill="#c8c8c8"/><path d="M10.5 2.5L12.5 0.5" stroke="#aaa" stroke-width="1"/></svg>
<svg style="left:26px;top:338px" width="11" height="11" viewBox="0 0 11 11" ><path d="M0.5 10.5L9 2" stroke="#111" stroke-width="1.5"/><path d="M4.5 1H10V6.5Z" fill="#111"/></svg>
<svg style="left:41.6px;top:343px" width="5" height="3" viewBox="0 0 5 3" ><path d="M0 0H4.6L2.3 2.5Z" fill="#111"/></svg>
<svg style="left:25.8px;top:360px" width="11" height="10" viewBox="0 0 11 10" ><path d="M1 2V5.5C1 8.8 5.2 8.8 5.2 5.5V3.8C5.2 0.6 9.4 0.6 9.4 3.8V7" stroke="#111" stroke-width="1.4" fill="none"/></svg>
<svg style="left:41.6px;top:363px" width="5" height="3" viewBox="0 0 5 3" ><path d="M0 0H4.6L2.3 2.5Z" fill="#111"/></svg>
<svg style="left:25.8px;top:380.6px" width="12" height="8" viewBox="0 0 12 8" ><rect x="0.65" y="0.65" width="10.2" height="6.7" fill="#9a9ea0" stroke="#1a1a1a" stroke-width="1.3"/></svg>
<svg style="left:41.6px;top:383px" width="5" height="3" viewBox="0 0 5 3" ><path d="M0 0H4.6L2.3 2.5Z" fill="#111"/></svg>
<svg style="left:26px;top:398.4px" width="13" height="13" viewBox="0 0 13 13" ><g transform="scale(1.2 0.9)"><path d="M3.5 8V3.2C3.5 2 5 2 5 3.2V6.5V2C5 0.6 6.6 0.6 6.6 2V6.5V2.5C6.6 1.2 8.2 1.2 8.2 2.5V6.8V4C8.2 2.8 9.8 2.8 9.8 4V9.5C9.8 12 8.5 13.5 6.5 13.5C4.5 13.5 3.5 12.5 2.3 10.5L0.8 8C0.2 7 1.5 6.2 2.3 7.2Z" fill="#fff" stroke="#111" stroke-width="1" stroke-linejoin="round"/></g></svg>
<svg style="left:25.2px;top:418px" width="12" height="14" viewBox="0 0 12 14" ><g transform="scale(1.08 1)"><path d="M0.5 0.5H8L11.5 4V13.5H0.5Z" fill="#f4f4f4" stroke="#8a8e94" stroke-width="1"/><path d="M8 0.5V4H11.5" fill="none" stroke="#8a8e94" stroke-width="1"/><path d="M1.5 8.5L3 11L4.5 5.5H7" stroke="#9a9ea4" stroke-width="1" fill="none"/><circle cx="7.8" cy="9" r="1.8" fill="none" stroke="#9a9ea4" stroke-width=".9"/></g></svg>
<svg style="left:41.6px;top:423px" width="5" height="3" viewBox="0 0 5 3" ><path d="M0 0H4.6L2.3 2.5Z" fill="#111"/></svg>
<svg style="left:25.2px;top:437.6px" width="13" height="14" viewBox="0 0 13 14" ><g transform="scale(1.08 .97)"><path d="M0.5 0.5H8L11.5 4V13.5H0.5Z" fill="#fff" stroke="#111" stroke-width="1.1"/><path d="M8 0.5V4H11.5" fill="#ccc" stroke="#111" stroke-width="1"/><path d="M2.4 3V12" stroke="#111" stroke-width="1.6" stroke-dasharray="1.2 .8"/><path d="M2 12H10.8" stroke="#111" stroke-width="1.4" stroke-dasharray="1.2 .8"/><path d="M3.6 8.5C4.6 7 5.2 8 6 9.5S8 9 10.2 5" stroke="#f0181c" stroke-width="1.3" fill="none"/></g></svg>
<svg style="left:41.6px;top:443px" width="5" height="3" viewBox="0 0 5 3" ><path d="M0 0H4.6L2.3 2.5Z" fill="#111"/></svg>
<svg style="left:25px;top:457px" width="14" height="14" viewBox="0 0 14 14" ><path d="M3.5 8V3.2C3.5 2 5 2 5 3.2V6.5V2C5 0.6 6.6 0.6 6.6 2V6.5V2.5C6.6 1.2 8.2 1.2 8.2 2.5V6.8V4C8.2 2.8 9.8 2.8 9.8 4V9C9.8 11 8.5 12 6.5 12C4.5 12 3.5 11.5 2.3 10L0.8 8C0.2 7 1.5 6.2 2.3 7.2Z" fill="#e8e8e8" stroke="#9a9ea4" stroke-width="1" stroke-linejoin="round"/><path d="M12.5 1V13M1 12.5H14M11 3.5H14M11 6.5H14M11 9.5H14" stroke="#a4a8ae" stroke-width="1"/></svg>
<svg style="left:25px;top:477px" width="14" height="15" viewBox="0 0 14 15" ><path d="M4.5 4.5L7 1.5H13.5V11L11 14.5H4.5Z" fill="#9aa09e" stroke="#7a7e80" stroke-width="1"/><path d="M4.5 4.5H11V14.5M11 4.5L13.5 1.5" stroke="#7a7e80" stroke-width="1" fill="none"/><path d="M4.5 6C1 5 0 9 3 10.5" stroke="#b0b4b8" stroke-width="1.3" fill="none"/></svg>
<div style="position:absolute;left:22px;top:497px;width:29px;height:9.6px;border-radius:0 0 4px 0;background:linear-gradient(90deg,#e4e4e4 0%,#e4e4e4 33%,#c8d0dc 37%,#c8d0dc 72%,#bccade 80%,#a8bedc 100%)"></div>
<div style="position:absolute;left:22px;top:506.6px;width:31px;height:1.6px;background:#f8f8f8"></div>
<svg style="left:43px;top:499.6px" width="6" height="6" viewBox="0 0 6 6" ><path d="M0.5 0V5.2" stroke="#111" stroke-width="1"/><path d="M2.2 0V5.2L5.2 2.6Z" fill="#111"/></svg>
<svg style="left:25px;top:511px" width="14" height="3" viewBox="0 0 14 3" ><rect x="0" y="0" width="1.6" height="1.6" fill="#9aa0aa"/><rect x="0.8" y="0.8" width="1.2" height="1.2" fill="#fff" opacity=".8"/><rect x="3" y="0" width="1.6" height="1.6" fill="#9aa0aa"/><rect x="3.8" y="0.8" width="1.2" height="1.2" fill="#fff" opacity=".8"/><rect x="6" y="0" width="1.6" height="1.6" fill="#9aa0aa"/><rect x="6.8" y="0.8" width="1.2" height="1.2" fill="#fff" opacity=".8"/><rect x="9" y="0" width="1.6" height="1.6" fill="#9aa0aa"/><rect x="9.8" y="0.8" width="1.2" height="1.2" fill="#fff" opacity=".8"/><rect x="12" y="0" width="1.6" height="1.6" fill="#9aa0aa"/><rect x="12.8" y="0.8" width="1.2" height="1.2" fill="#fff" opacity=".8"/></svg>
<svg style="left:25.4px;top:519px" width="13.4" height="13" viewBox="0 0 13.4 13" ><rect x="0" y="0" width="13.4" height="3" fill="#a4aaa6"/><rect x="0" y="4.7" width="13.4" height="3.3" fill="#a8aeaa"/><rect x="0" y="9.7" width="13.4" height="3" fill="#9ea4ac"/><path d="M0 1.5H13.4M0 6.3H13.4M0 11.2H13.4" stroke="#c4c8c6" stroke-width=".8"/></svg>
<svg style="left:25px;top:538px" width="14" height="14" viewBox="0 0 14 14" ><circle cx="7" cy="7" r="6.3" fill="#f4f4f4" stroke="#555" stroke-width="1"/><path d="M10.5 5.5A3.6 3.6 0 1 0 10 10" stroke="#7a7e84" stroke-width="1.1" fill="none"/><path d="M7 9V13" stroke="#999" stroke-width="1"/></svg>
<svg style="left:26px;top:558px" width="12" height="6" viewBox="0 0 12 6" ><rect x="0.5" y="0.5" width="11" height="6" fill="#e8e8e8" stroke="#9a9ea4" stroke-width="1"/><rect x="7" y="2" width="3" height="3" fill="#aaa"/></svg>
<svg style="left:128.8px;top:118.8px" width="12" height="18" viewBox="0 0 12 18" ><path d="M0.6 0.8V15.2L3.9 12.1L5.6 16.4L7.8 15.5L6.1 11.3H10.6Z" fill="#fff" stroke="#1a1018" stroke-width="1.1" stroke-linejoin="round"/></svg>
<svg style="left:0px;top:4px" width="20" height="20" viewBox="0 0 20 20" ><rect x="4" y="1.2" width="14.2" height="12.8" fill="#fff" stroke="#f0f0f6" stroke-width="1"/>
<rect x="4.6" y="1.8" width="13.2" height="12" fill="#fcfcff" stroke="#8a88e0" stroke-width=".9"/>
<rect x="15.6" y="2.2" width="2.4" height="11.4" fill="#6e64e4"/>
<rect x="5" y="2.2" width="10.6" height="1.2" fill="#c4d2f6"/>
<path d="M12.4 3.5V13.5M5 7H15.5M5 10.5H15.5" stroke="#dce4f8" stroke-width=".8"/>
<circle cx="7.4" cy="10.8" r="7.3" fill="#f08e7e" stroke="#ac4024" stroke-width="1.2"/>
<path d="M3.6 4.4C5.5 3 9.3 3 11.2 4.4L10.8 5.4H4Z" fill="#b84434"/>
<path d="M5 15.6H10L10.4 18H4.6Z" fill="#f2ead4"/>
<path d="M3.4 17.4C5.5 18.9 9.5 18.9 11.4 17.4" stroke="#8a3418" stroke-width="1.2" fill="none"/>
<path d="M5 7C6 5.6 8.5 5.8 9 6.6L7 8.6Z" fill="#f8e8a0"/>
<rect x="8.8" y="6.6" width="2.4" height="1.4" fill="#2838c0"/><rect x="5" y="12" width="2.8" height="1.4" fill="#2030b8"/>
<path d="M6 11L11 6.6" stroke="#e86848" stroke-width="1"/></svg>
</div>
</body></html>
